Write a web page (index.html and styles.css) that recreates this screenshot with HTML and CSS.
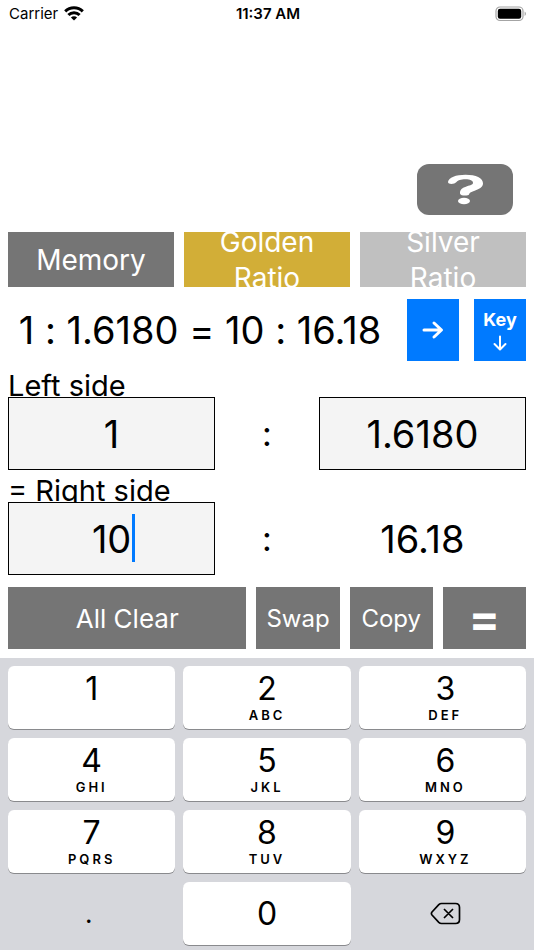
FILE: index.html
```html
<!DOCTYPE html>
<html lang="en">
<head>
<meta charset="utf-8">
<meta name="viewport" content="width=device-width, initial-scale=1">
<title>Ratio Calculator</title>
<link rel="stylesheet" href="styles.css">
</head>
<body>
<div class="app">
  <header class="status">
    <div class="carrier">
      <span>Carrier</span>
      <svg class="wifi" viewBox="0 0 20 15" width="20" height="15" aria-hidden="true">
        <g fill="none" stroke="#000" stroke-width="3">
          <path d="M1.2 5.4A12.6 12.6 0 0 1 18.8 5.4"/>
          <path d="M4.4 9A7.8 7.8 0 0 1 15.6 9"/>
        </g>
        <path d="M10 14.4L6.9 11.5A4.4 4.4 0 0 1 13.1 11.5Z"/>
      </svg>
    </div>
    <time class="clock">11:37 AM</time>
    <svg class="battery" viewBox="0 0 32 16" width="32" height="16" aria-hidden="true">
      <rect x="1" y="1" width="27" height="13.5" rx="4" fill="none" stroke="#a4a4a4" stroke-width="1.2"/>
      <rect x="2.8" y="2.8" width="23.4" height="9.9" rx="2.2"/>
      <path d="M29.6 5.5C31.4 6.3 31.4 9.3 29.6 10Z" fill="#a4a4a4"/>
    </svg>
  </header>

  <main class="main">
    <button class="help" type="button" aria-label="Help">
      <svg viewBox="0 0 96 51" width="96" height="51" aria-hidden="true">
        <path d="M31 18C31.500 13.500 39 10.700 48.500 10.700C59 10.700 66 14 66 19.300C66 23.500 62 25.200 57 27C53 28.500 52.500 29 52 30.500C51.500 32 43.500 32.300 43 29.500C42.800 25.500 45 24 50 22.200C53.500 21 56 20.700 56 18.700C56 16.600 53 15.300 48.500 15.300C43.500 15.300 41.500 16.200 39.500 18C37.500 20.500 31.200 20.800 31 18Z" fill="#fff"/>
        <ellipse cx="47" cy="37" rx="6" ry="3.300" fill="#fff"/>
      </svg>
    </button>

    <nav class="modes">
      <button class="btn mode" type="button">Memory</button>
      <button class="btn mode gold" type="button">Golden<br>Ratio</button>
      <button class="btn mode silver" type="button">Silver<br>Ratio</button>
    </nav>

    <section class="result">
      <output class="formula">1 : 1.6180 = 10 : 16.18</output>
      <button class="btn blue" type="button" aria-label="Next">
        <svg viewBox="0 0 22 20" width="22" height="20" aria-hidden="true"><path d="M2 10H19M12 3L19.500 10L12 17"/></svg>
      </button>
      <button class="btn blue" type="button">
        <span>Key</span>
        <svg viewBox="0 0 14 16" width="14" height="16" aria-hidden="true"><path class="thin" d="M7 1.500V14M1.500 9L7 14.500L12.500 9"/></svg>
      </button>
    </section>

    <form class="ratios">
      <label class="label" for="left-a">Left side</label>
      <div class="ratio">
        <input class="field" id="left-a" type="text" inputmode="decimal" value="1">
        <span class="colon">:</span>
        <input class="field" type="text" inputmode="decimal" value="1.6180" aria-label="Left side, second value">
      </div>
      <label class="label" for="right-a">= Right side</label>
      <div class="ratio">
        <div class="editing">
          <input class="field" id="right-a" type="text" inputmode="decimal" value="10">
          <span class="caret"></span>
        </div>
        <span class="colon">:</span>
        <output class="answer">16.18</output>
      </div>
    </form>

    <div class="actions">
      <button class="btn clear" type="button">All Clear</button>
      <button class="btn" type="button">Swap</button>
      <button class="btn" type="button">Copy</button>
      <button class="btn equals" type="button">=</button>
    </div>
  </main>

  <div class="keypad">
    <button class="key" type="button">1</button>
    <button class="key" type="button">2<small>ABC</small></button>
    <button class="key" type="button">3<small>DEF</small></button>
    <button class="key" type="button">4<small>GHI</small></button>
    <button class="key" type="button">5<small>JKL</small></button>
    <button class="key" type="button">6<small>MNO</small></button>
    <button class="key" type="button">7<small>PQRS</small></button>
    <button class="key" type="button">8<small>TUV</small></button>
    <button class="key" type="button">9<small>WXYZ</small></button>
    <button class="key plain point" type="button">.</button>
    <button class="key zero" type="button">0</button>
    <button class="key plain" type="button" aria-label="Delete">
      <svg viewBox="0 0 31 23" width="31" height="23" aria-hidden="true">
        <path d="M11.500 1.500H25.500Q29.500 1.500 29.500 5.500V17.500Q29.500 21.500 25.500 21.500H11.500Q10 21.500 8.800 20.300L2 13Q.8 11.500 2 10L8.800 2.700Q10 1.500 11.500 1.500ZM14 7L23 16M23 7L14 16" fill="none" stroke="#000" stroke-width="1.700" stroke-linejoin="round"/>
      </svg>
    </button>
  </div>
</div>
</body>
</html>
```

FILE: styles.css
```css
* {
  box-sizing: border-box;
}

body {
  margin: 0;
  background: #fff;
  color: #000;
  font-family: Inter, "Liberation Sans", sans-serif;
}

button,
input {
  margin: 0;
  padding: 0;
  border: 0;
  border-radius: 0;
  color: inherit;
  font: inherit;
}

.app {
  display: flex;
  flex-direction: column;
  min-height: 100vh;
}

.status {
  display: grid;
  grid-template-columns: 1fr auto 1fr;
  align-items: center;
  height: 27px;
  padding: 0 7px 0 9px;
  font-size: 15px;
}

.carrier {
  display: flex;
  align-items: center;
  gap: 6px;
}

.clock {
  font-weight: 600;
}

.battery {
  justify-self: end;
}

.main {
  display: flex;
  flex: 1;
  flex-direction: column;
  justify-content: flex-end;
  padding: 0 8px 9px;
}

.help {
  display: flex;
  align-self: flex-end;
  margin: 0 13px 17px 0;
  border-radius: 12px;
  background: #757575;
}

.modes {
  display: grid;
  grid-template-columns: repeat(3, 1fr);
  gap: 10px;
}

.btn {
  display: flex;
  align-items: center;
  justify-content: center;
  height: 62px;
  overflow: hidden;
  background: #757575;
  color: #fff;
  font-size: 24px;
}

.mode {
  height: 55px;
  font-size: 28px;
  line-height: 36px;
}

.gold {
  background: #d2ae37;
}

.silver {
  background: #c0c0c0;
}

.result {
  display: flex;
  gap: 15px;
  margin-top: 12px;
}

.formula {
  flex: 1;
  font-size: 38px;
  font-variant-ligatures: no-contextual;
  line-height: 62px;
  text-align: center;
  white-space: nowrap;
}

.blue {
  flex-direction: column;
  gap: 4px;
  width: 52px;
  background: #007aff;
  font-size: 18px;
  font-weight: 700;
  line-height: 22px;
}

.blue path {
  fill: none;
  stroke: #fff;
  stroke-width: 3;
  stroke-linecap: round;
  stroke-linejoin: round;
}

.blue .thin {
  stroke-width: 2;
}

.ratios {
  margin-top: 4px;
}

.label {
  display: block;
  height: 32px;
  overflow: hidden;
  font-size: 29px;
  line-height: 42px;
}

.ratio {
  display: grid;
  grid-template-columns: 2fr 1fr 2fr;
  height: 73px;
  align-items: center;
  font-size: 38px;
  text-align: center;
}

.colon {
  font-size: 34px;
}

.field {
  display: block;
  width: 100%;
  height: 73px;
  border: 1px solid #000;
  background: #f4f4f4;
  text-align: center;
}

.editing {
  position: relative;
}

.caret {
  position: absolute;
  top: 12px;
  left: calc(50% + 20px);
  width: 3px;
  height: 48px;
  background: #007aff;
}

.actions {
  display: grid;
  grid-template-columns: 238fr 83fr 83fr 83fr;
  gap: 10px;
  margin-top: 12px;
}

.clear {
  font-size: 26px;
}

.equals {
  font-size: 46px;
  font-weight: 700;
}

.keypad {
  display: grid;
  grid-template-columns: repeat(3, 1fr);
  gap: 9px 8px;
  padding: 8px 8px 5px;
  background: #d6d7dc;
}

.key {
  display: flex;
  flex-direction: column;
  align-items: center;
  height: 63px;
  padding-top: 5px;
  border-radius: 6px;
  background: #fff;
  box-shadow: 0 1px 0 #898a8d;
  font-size: 32px;
  line-height: 36px;
}

.key small {
  font-size: 13px;
  font-weight: 600;
  letter-spacing: 3px;
  line-height: 16px;
}

.zero,
.plain {
  justify-content: center;
  padding: 0;
}

.key:nth-child(3n) {
  padding-left: 6px;
}

.plain {
  background: none;
  box-shadow: none;
}

.point {
  padding-right: 6px;
  font-size: 26px;
}
```
